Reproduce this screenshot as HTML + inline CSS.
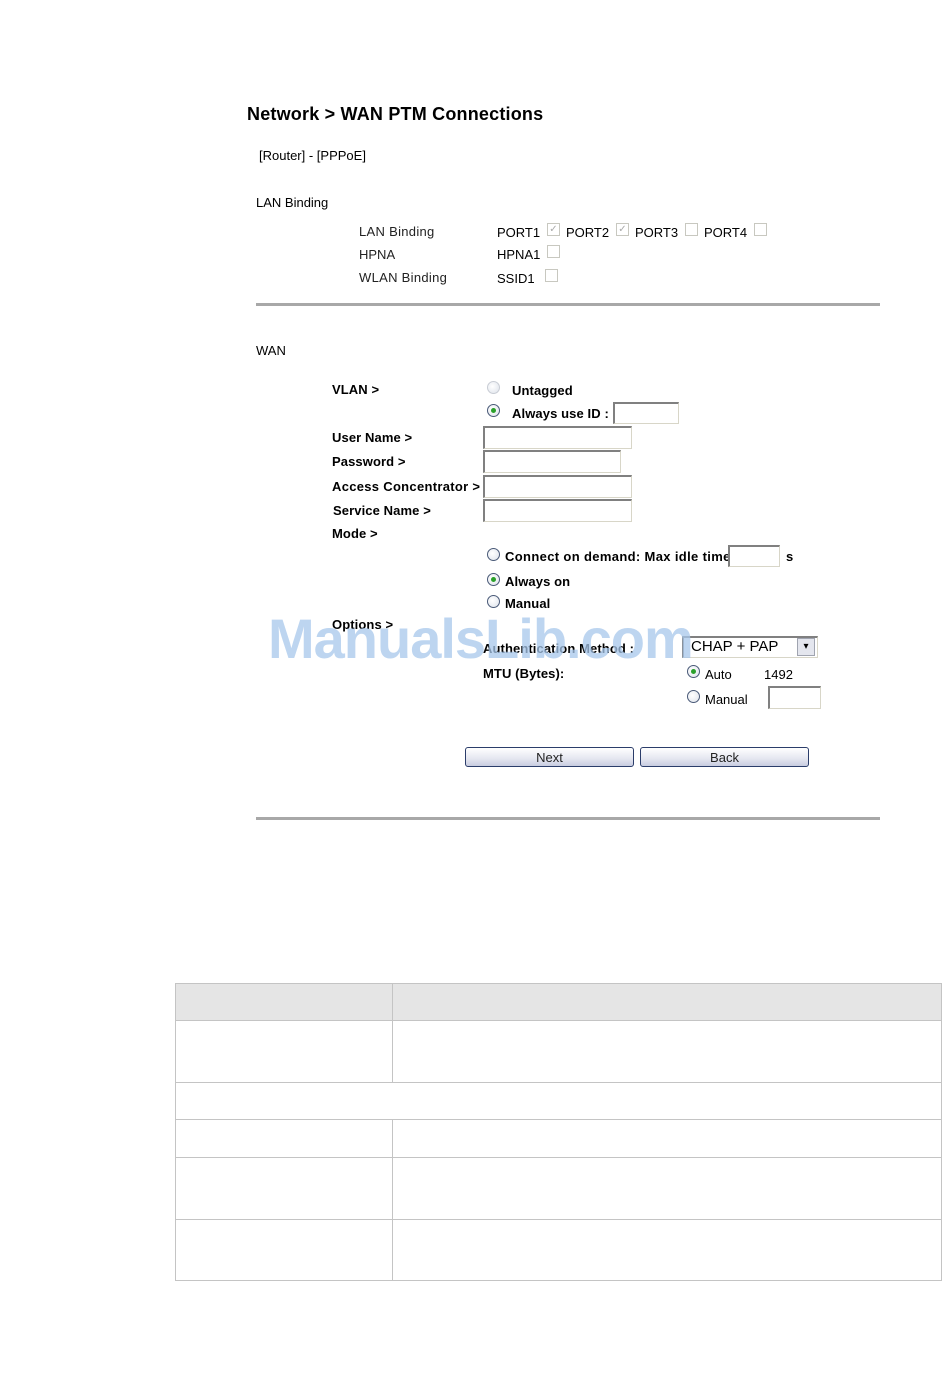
<!DOCTYPE html>
<html><head><meta charset="utf-8"><style>
body{margin:0;width:950px;height:1388px;background:#fff;position:relative;font-family:"Liberation Sans",sans-serif;color:#000;overflow:hidden}
.t{position:absolute;font-size:13px;line-height:16px;white-space:nowrap;margin-top:1px}
.b{font-weight:bold;letter-spacing:0.1px}
.g{color:#222}
.in{position:absolute;border:1px solid #d8d6c8;border-top:2px solid #808080;border-left:2px solid #808080;background:#fff;box-sizing:border-box}
.cb{position:absolute;width:13px;height:13px;border:1px solid #c8c8c0;box-sizing:border-box;background:#fff;font-size:10px;line-height:11px;color:#aaa;text-align:center}
.r{position:absolute;width:13px;height:13px;border-radius:50%;border:1px solid #4a5a78;box-sizing:border-box;background:radial-gradient(circle at 40% 40%,#fff,#dde2ea)}
.r.l{border-color:#c8ccd4}
.r.on::after{content:"";position:absolute;left:3px;top:3px;width:5px;height:5px;border-radius:50%;background:#2aa02a}
.hr{position:absolute;left:256px;width:624px;height:3px;background:#a8a8a8}
.btn{position:absolute;top:747px;height:20px;width:169px;border:1px solid #2b3d6a;border-radius:3px;box-sizing:border-box;background:linear-gradient(#fff,#e4e6f0 60%,#c8cce0);font-size:13px;text-align:center;line-height:19px;color:#222}
.wm{position:absolute;left:268px;top:606px;font-size:56px;font-weight:bold;color:#a8c8ec;opacity:.75;letter-spacing:-1px;line-height:66px}
.tb{position:absolute;left:175px;width:767px;border-top:1px solid #c4c4c4}
</style></head><body>
<div class="t b" style="left:247px;top:103px;font-size:18px;line-height:20px;letter-spacing:0.2px">Network &gt; WAN PTM Connections</div>
<div class="t" style="left:259px;top:147px">[Router] - [PPPoE]</div>
<div class="t" style="left:256px;top:194px">LAN Binding</div>

<div class="t g" style="left:359px;top:223px;letter-spacing:0.3px">LAN Binding</div>
<div class="t g" style="left:359px;top:246px">HPNA</div>
<div class="t g" style="left:359px;top:269px;letter-spacing:0.3px">WLAN Binding</div>
<div class="t" style="left:497px;top:224px">PORT1</div><div class="cb" style="left:547px;top:223px">✓</div>
<div class="t" style="left:566px;top:224px">PORT2</div><div class="cb" style="left:616px;top:223px">✓</div>
<div class="t" style="left:635px;top:224px">PORT3</div><div class="cb" style="left:685px;top:223px"></div>
<div class="t" style="left:704px;top:224px">PORT4</div><div class="cb" style="left:754px;top:223px"></div>
<div class="t" style="left:497px;top:246px">HPNA1</div><div class="cb" style="left:547px;top:245px"></div>
<div class="t" style="left:497px;top:270px">SSID1</div><div class="cb" style="left:545px;top:269px"></div>
<div class="hr" style="top:303px"></div>

<div class="t" style="left:256px;top:342px">WAN</div>
<div class="t b" style="left:332px;top:381px">VLAN &gt;</div>
<div class="r l" style="left:487px;top:381px"></div><div class="t b" style="left:512px;top:382px">Untagged</div>
<div class="r on" style="left:487px;top:404px"></div><div class="t b" style="left:512px;top:405px">Always use ID :</div>
<div class="in" style="left:613px;top:402px;width:66px;height:22px"></div>
<div class="t b" style="left:332px;top:429px">User Name &gt;</div><div class="in" style="left:483px;top:426px;width:149px;height:23px"></div>
<div class="t b" style="left:332px;top:453px">Password &gt;</div><div class="in" style="left:483px;top:450px;width:138px;height:23px"></div>
<div class="t b" style="left:332px;top:478px;letter-spacing:0.3px">Access Concentrator &gt;</div><div class="in" style="left:483px;top:475px;width:149px;height:23px"></div>
<div class="t b" style="left:333px;top:502px">Service Name &gt;</div><div class="in" style="left:483px;top:499px;width:149px;height:23px"></div>
<div class="t b" style="left:332px;top:525px">Mode &gt;</div>
<div class="r" style="left:487px;top:548px"></div><div class="t b" style="left:505px;top:548px;letter-spacing:0.35px">Connect on demand: Max idle time</div>
<div class="in" style="left:728px;top:545px;width:52px;height:22px"></div><div class="t b" style="left:786px;top:548px">s</div>
<div class="r on" style="left:487px;top:573px"></div><div class="t b" style="left:505px;top:573px">Always on</div>
<div class="r" style="left:487px;top:595px"></div><div class="t b" style="left:505px;top:595px">Manual</div>
<div class="t b" style="left:332px;top:616px">Options &gt;</div>
<div class="t b" style="left:483px;top:640px">Authentication Method :</div>
<div class="in" style="left:682px;top:636px;width:136px;height:22px;border-right:1px solid #d8d6c8"></div>
<div class="t" style="left:691px;top:638px;font-size:15px">CHAP + PAP</div>
<div style="position:absolute;left:797px;top:638px;width:18px;height:18px;border:1px solid #a0a4b0;box-sizing:border-box;background:#e4e6ee;font-size:10px;text-align:center;line-height:16px">▾</div>
<div class="t b" style="left:483px;top:665px">MTU (Bytes):</div>
<div class="r on" style="left:687px;top:665px"></div><div class="t" style="left:705px;top:666px">Auto</div>
<div class="t" style="left:764px;top:666px">1492</div>
<div class="r" style="left:687px;top:690px"></div><div class="t" style="left:705px;top:691px">Manual</div>
<div class="in" style="left:768px;top:686px;width:53px;height:23px"></div>
<div class="btn" style="left:465px">Next</div>
<div class="btn" style="left:640px">Back</div>
<div class="wm">ManualsLib.com</div>
<div class="hr" style="top:817px"></div>

<div style="position:absolute;left:175px;top:983px;width:767px;height:37px;background:#e5e5e5"></div>
<div style="position:absolute;left:175px;top:983px;width:767px;height:298px;border:1px solid #c4c4c4;box-sizing:border-box;border-right:none"></div>
<div class="tb" style="top:1020px"></div>
<div class="tb" style="top:1082px"></div>
<div class="tb" style="top:1119px"></div>
<div class="tb" style="top:1157px"></div>
<div class="tb" style="top:1219px"></div>
<div style="position:absolute;left:392px;top:983px;width:1px;height:99px;background:#c4c4c4"></div>
<div style="position:absolute;left:392px;top:1119px;width:1px;height:162px;background:#c4c4c4"></div>
<div style="position:absolute;left:941px;top:983px;width:1px;height:298px;background:#c4c4c4"></div>
</body></html>
